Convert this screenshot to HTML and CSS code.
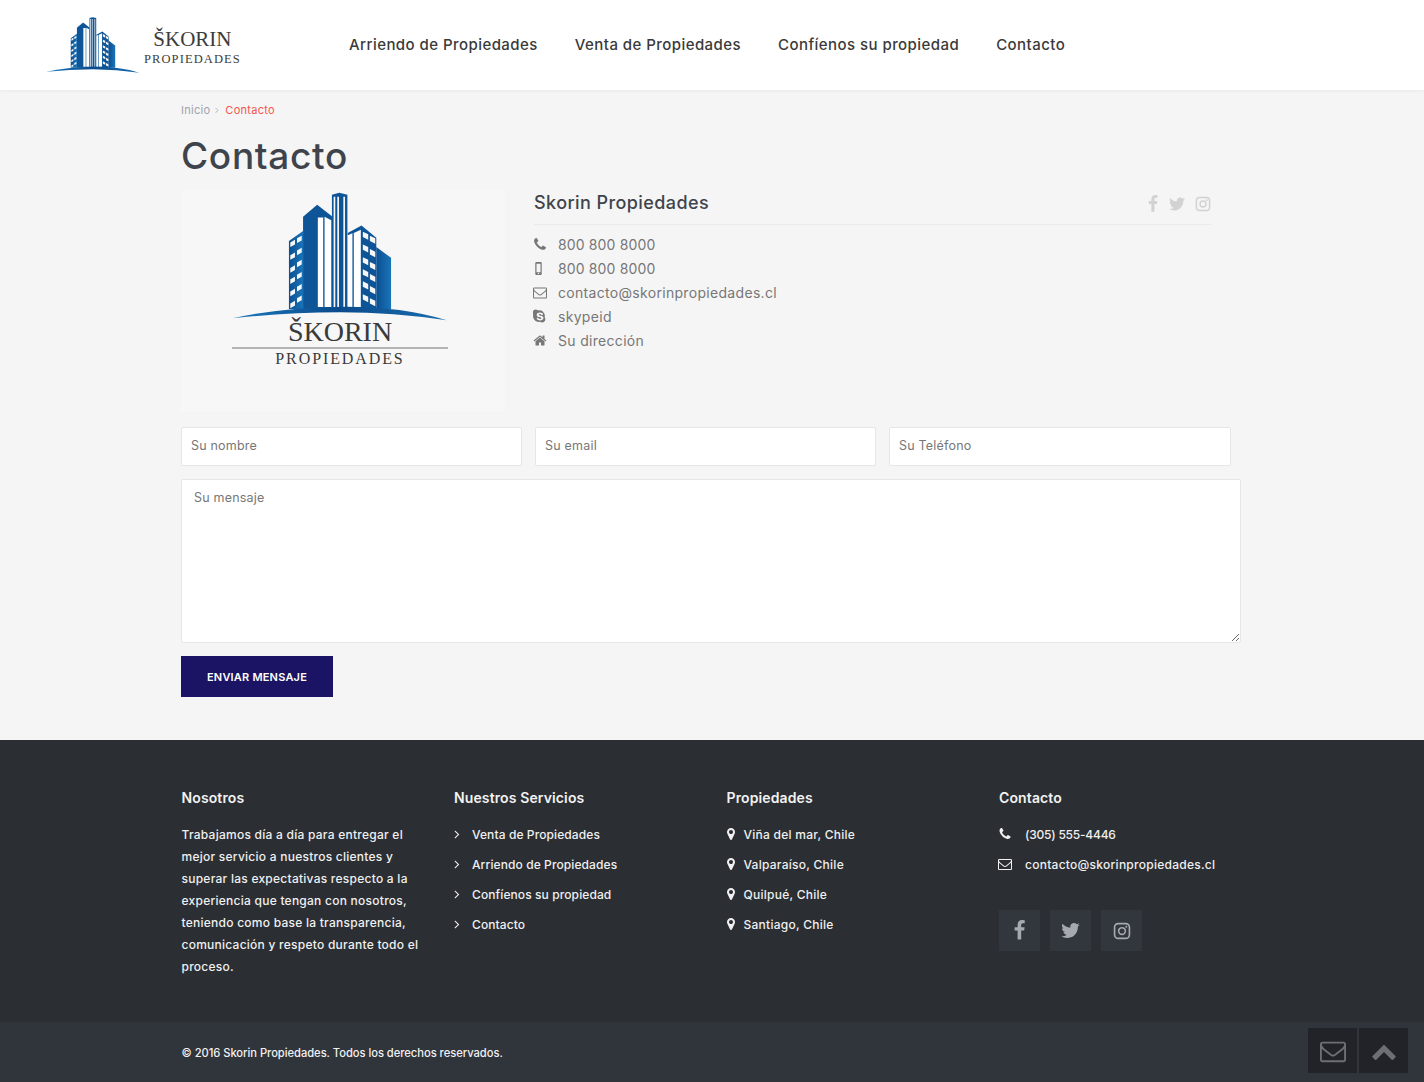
FILE: index.html
```html
<!DOCTYPE html>
<html lang="es">
<head>
<meta charset="utf-8">
<title>Contacto - Skorin Propiedades</title>
<link rel="stylesheet" href="styles.css">
</head>
<body>
<svg class="defs" width="0" height="0" aria-hidden="true">
  <defs>
    <linearGradient id="bl" x1="0" x2="1" y1="0" y2="0"><stop offset="0" stop-color="#0b4f92"/><stop offset="1" stop-color="#1a74b8"/></linearGradient>
    <linearGradient id="arc" x1="0" x2="1" y1="0" y2="0"><stop offset="0" stop-color="#1b79bb"/><stop offset=".5" stop-color="#0a4a8c"/><stop offset="1" stop-color="#1b6fb0"/></linearGradient>
    <symbol id="building" viewBox="160 30 640 390">
      <path fill="url(#bl)" d="M328 182l42-30v232h-42z"/>
      <path fill="#0d5597" d="M370 110l42-36 44 34v276h-86z"/>
      <path fill="#fff" d="M414 112l16 0 0 266-16 0zM434 110l20 10v258h-20z" />
      <path fill="#0d5597" d="M456 44l22-6 24 6v340h-46z"/>
      <path fill="#f6f6f6" d="M461 50h5v328h-5zM472 50h5v328h-5zM490 50h5v328h-5z"/>
      <path fill="#0d5597" d="M503 158l41-22 44 36v212h-85z"/>
      <path fill="#fff" d="M503 165l14-6v219h-14zM521 158l21-10v230h-21z"/>
      <path fill="url(#bl)" d="M588 200l44 32v152h-44z"/>
      <path fill="#f6f6f6" d="M332 186l14-8v14l-14 8zM352 174l14-8v14l-14 8zM332 224l14-8v14l-14 8zM352 210l14-8v14l-14 8zM332 262l14-8v14l-14 8zM352 246l14-8v14l-14 8zM332 296l14-8v14l-14 8zM352 282l14-8v14l-14 8zM332 332l14-8v14l-14 8zM352 318l14-8v14l-14 8zM332 368l14-8v14l-14 8zM352 352l14-8v14l-14 8z"/>
      <path fill="#f6f6f6" d="M548 154l16 8v16l-16-8zM569 166l16 8v16l-16-8zM548 192l16 8v16l-16-8zM569 206l16 8v16l-16-8zM548 230l16 8v16l-16-8zM569 244l16 8v16l-16-8zM548 266l16 8v16l-16-8zM569 280l16 8v16l-16-8zM548 302l16 8v16l-16-8zM569 316l16 8v16l-16-8zM548 340l16 8v16l-16-8zM569 352l16 8v16l-16-8z"/>
      <path fill="url(#arc)" d="M160 412Q300 380 480 378T798 418Q640 394 480 394T160 412z"/>
    </symbol>
    <symbol id="i-phone" viewBox="0 0 1408 1792"><path d="M1408 1240q0 27-10 70.5t-21 68.5q-21 50-122 106-94 51-186 51-27 0-53-3.5t-57.5-12.5-47-14.5-55.5-20.5-49-18q-98-35-175-83-127-79-264-216t-216-264q-48-77-83-175-3-9-18-49t-20.5-55.5-14.5-47-12.5-57.5-3.5-53q0-92 51-186 56-101 106-122 25-11 68.5-21t70.5-10q14 0 21 3 18 6 53 76 11 19 30 54t35 63.5 31 53.5q3 4 17.5 25t21.5 35.5 7 28.5q0 20-28.5 50t-62 55-62 53-28.5 46q0 9 5 22.5t8.5 20.5 14 24 11.5 19q76 137 174 235t235 174q2 1 19 11.5t24 14 20.5 8.5 22.5 5q18 0 46-28.5t53-62 55-62 50-28.5q14 0 28.5 7t35.5 21.5 25 17.5q25 15 53.5 31t63.5 35 54 30q70 35 76 53 3 7 3 21z"/></symbol>
    <symbol id="i-mail" viewBox="0 0 1792 1792"><path d="M1664 1504v-768q-32 36-69 66-268 206-426 338-51 43-83 67t-86.5 48.5-102.5 24.5h-2q-48 0-102.5-24.5t-86.5-48.5-83-67q-158-132-426-338-37-30-69-66v768q0 13 9.5 22.5t22.5 9.5h1472q13 0 22.5-9.5t9.5-22.5zm0-1051v-24.5l-.5-13-3-12.5-5.5-9-9-7.5-14-2.5h-1472q-13 0-22.5 9.5t-9.5 22.5q0 168 147 284 193 152 401 317 6 5 35 29.5t46 37.5 44.5 31.5 50.5 27.5 43 9h2q20 0 43-9t50.5-27.5 44.5-31.5 46-37.5 35-29.5q208-165 401-317 54-43 100.5-115.5t46.5-131.5zm128-37v1088q0 66-47 113t-113 47h-1472q-66 0-113-47t-47-113v-1088q0-66 47-113t113-47h1472q66 0 113 47t47 113z"/></symbol>
    <symbol id="i-mobile" viewBox="0 0 768 1792"><path fill-rule="evenodd" d="M112 128h544q112 0 112 112v1312q0 112-112 112H112Q0 1664 0 1552V240q0-112 112-112zm32 192v1024h480V320zm240 1090a80 80 0 1 0 0 160 80 80 0 0 0 0-160z"/></symbol>
    <symbol id="i-skype" viewBox="0 0 1536 1792"><path d="M1173 1063q0-50-19.5-91t-48.5-68.5-73-49-82.5-34-87.5-23.5l-104-24q-30-7-44-10.5t-35-11.5-30-16-16.5-21-7.5-30q0-77 144-77 43 0 77 12t54 28.5 38 33.5 40 29 48 12q47 0 75.5-32t28.5-77q0-55-56-99.5t-142-67.5-182-23q-68 0-132 15.5t-119.5 47-89 87-33.5 128.5q0 61 19 106.5t56 75.5 80 48.5 103 32.5l146 36q90 22 112 36 32 20 32 60 0 39-40 64.5t-105 25.5q-51 0-91.5-16t-65-38.5-45.5-45-46-38.5-54-16q-50 0-75.5 30t-25.5 75q0 92 122 157.5t291 65.5q73 0 140-18.5t122.5-53.5 88.5-93.5 33-131.5zm235 163q0 159-112.5 271.5t-271.5 112.5q-130 0-234-80-77 16-150 16-143 0-273.5-55.5t-225-150-150-225-55.5-273.5q0-73 16-150-80-104-80-234 0-159 112.5-271.5t271.5-112.5q130 0 234 80 77-16 150-16 143 0 273.5 55.5t225 150 150 225 55.5 273.5q0 73-16 150 80 104 80 234z"/></symbol>
    <symbol id="i-home" viewBox="0 0 1792 1792"><path d="M1472 992v480q0 26-19 45t-45 19h-384v-384h-256v384h-384q-26 0-45-19t-19-45v-480q0-1 .5-3t.5-3l575-474 575 474q1 2 1 6zm223-69l-62 74q-8 9-21 11h-3q-13 0-21-7l-692-577-692 577q-12 8-24 7-13-2-21-11l-62-74q-8-10-7-23.5t11-21.5l719-599q32-26 76-26t76 26l244 204v-195q0-14 9-23t23-9h192q14 0 23 9t9 23v408l219 182q10 8 11 21.5t-7 23.5z"/></symbol>
    <symbol id="i-fb" viewBox="0 0 1792 1792"><path d="M1343 12v264h-157q-86 0-116 36t-30 108v189h293l-39 296h-254v759h-306v-759h-255v-296h255v-218q0-186 104-288.5t277-102.5q147 0 228 12z"/></symbol>
    <symbol id="i-tw" viewBox="0 0 1792 1792"><path d="M1684 408q-67 98-162 167 1 14 1 42 0 130-38 259.5t-115.5 248.5-184.5 210.5-258 146-323 54.5q-271 0-496-145 35 4 76 4 225 0 401-138-105-2-188-64.5t-114-159.5q33 5 61 5 43 0 85-11-112-23-185.5-111.5t-73.5-205.5v-4q68 38 146 41-66-44-105-115t-39-154q0-88 44-163 121 149 294.5 238.5t371.5 99.5q-8-38-8-74 0-134 94.5-228.5t228.5-94.5q140 0 236 102 109-21 205-78-37 115-142 178 92-10 184-50z"/></symbol>
    <symbol id="i-ig" viewBox="0 0 24 24"><path fill-rule="evenodd" d="M7 1h10a6 6 0 0 1 6 6v10a6 6 0 0 1-6 6H7a6 6 0 0 1-6-6V7a6 6 0 0 1 6-6zm0 2.2A3.800 3.800 0 0 0 3.200 7v10A3.800 3.800 0 0 0 7 20.800h10a3.800 3.800 0 0 0 3.800-3.800V7A3.800 3.800 0 0 0 17 3.200zM12 6.500a5.500 5.500 0 1 1 0 11 5.500 5.500 0 0 1 0-11zm0 2.100a3.400 3.400 0 1 0 0 6.800 3.400 3.400 0 0 0 0-6.800zM17.700 4.900a1.400 1.400 0 1 1 0 2.800 1.400 1.400 0 0 1 0-2.800z"/></symbol>
    <symbol id="i-pin" viewBox="256 128 1024 1536"><path fill-rule="evenodd" d="M1152 640q0-106-75-181t-181-75-181 75-75 181 75 181 181 75 181-75 75-181zm256 0q0 109-33 179l-364 774q-16 33-47.5 52t-67.5 19-67.5-19-46.5-52l-365-774q-33-70-33-179 0-212 150-362t362-150 362 150 150 362z" transform="translate(-128 0)"/></symbol>
    <symbol id="i-angle" viewBox="0 0 1792 1792"><path d="M1171 960q0 13-10 23l-466 466q-10 10-23 10t-23-10l-50-50q-10-10-10-23t10-23l393-393-393-393q-10-10-10-23t10-23l50-50q10-10 23-10t23 10l466 466q10 10 10 23z"/></symbol>
    <symbol id="i-up" viewBox="0 0 1792 1792"><path d="M1683 1331l-166 165q-19 19-45 19t-45-19l-531-531-531 531q-19 19-45 19t-45-19l-166-165q-19-19-19-45.500t19-45.500l742-741q19-19 45-19t45 19l742 741q19 19 19 45.500t-19 45.500z"/></symbol>
  </defs>
</svg>

<header class="topbar">
  <a class="brand" href="#">
    <svg class="brand-mark"><use href="#building"/></svg>
    <span class="brand-text"><span class="brand-name">ŠKORIN</span><span class="brand-sub">PROPIEDADES</span></span>
  </a>
  <nav class="mainnav">
    <a href="#">Arriendo de Propiedades</a>
    <a href="#">Venta de Propiedades</a>
    <a href="#">Confíenos su propiedad</a>
    <a href="#">Contacto</a>
  </nav>
</header>

<main class="content">
  <div class="crumbs"><a href="#">Inicio</a><span class="sep"><svg><use href="#i-angle"/></svg></span><span class="current">Contacto</span></div>
  <h1 class="page-title">Contacto</h1>

  <section class="company">
    <div class="company-logo">
      <svg class="logo-mark"><use href="#building"/></svg>
      <span class="logo-name">ŠKORIN</span>
      <span class="logo-sub">PROPIEDADES</span>
    </div>
    <div class="company-info">
      <div class="company-head">
        <h3>Skorin Propiedades</h3>
        <div class="company-social">
          <svg class="s-fb"><use href="#i-fb"/></svg>
          <svg class="s-tw"><use href="#i-tw"/></svg>
          <svg class="s-ig"><use href="#i-ig"/></svg>
        </div>
      </div>
      <ul class="info-list">
        <li class="tel"><span class="ic"><svg><use href="#i-phone"/></svg></span>800 800 8000</li>
        <li class="tel"><span class="ic"><svg class="mob"><use href="#i-mobile"/></svg></span>800 800 8000</li>
        <li><span class="ic"><svg><use href="#i-mail"/></svg></span>contacto@skorinpropiedades.cl</li>
        <li><span class="ic"><svg><use href="#i-skype"/></svg></span>skypeid</li>
        <li><span class="ic"><svg><use href="#i-home"/></svg></span>Su dirección</li>
      </ul>
    </div>
  </section>

  <form class="contact-form">
    <div class="form-row">
      <input type="text" placeholder="Su nombre">
      <input type="text" placeholder="Su email">
      <input type="text" placeholder="Su Teléfono">
    </div>
    <textarea placeholder="Su mensaje"></textarea>
    <button type="button">ENVIAR MENSAJE</button>
  </form>
</main>

<footer class="site-footer">
  <div class="foot-grid">
    <div class="foot-col">
      <h4>Nosotros</h4>
      <p>Trabajamos día a día para entregar el mejor servicio a nuestros clientes y superar las expectativas respecto a la experiencia que tengan con nosotros, teniendo como base la transparencia, comunicación y respeto durante todo el proceso.</p>
    </div>
    <div class="foot-col">
      <h4>Nuestros Servicios</h4>
      <ul class="foot-list services">
        <li><svg><use href="#i-angle"/></svg>Venta de Propiedades</li>
        <li><svg><use href="#i-angle"/></svg>Arriendo de Propiedades</li>
        <li><svg><use href="#i-angle"/></svg>Confíenos su propiedad</li>
        <li><svg><use href="#i-angle"/></svg>Contacto</li>
      </ul>
    </div>
    <div class="foot-col">
      <h4>Propiedades</h4>
      <ul class="foot-list places">
        <li><svg><use href="#i-pin"/></svg>Viña del mar, Chile</li>
        <li><svg><use href="#i-pin"/></svg>Valparaíso, Chile</li>
        <li><svg><use href="#i-pin"/></svg>Quilpué, Chile</li>
        <li><svg><use href="#i-pin"/></svg>Santiago, Chile</li>
      </ul>
    </div>
    <div class="foot-col">
      <h4>Contacto</h4>
      <ul class="foot-list contacts">
        <li class="ftel"><span class="fic"><svg><use href="#i-phone"/></svg></span>(305) 555-4446</li>
        <li><span class="fic"><svg><use href="#i-mail"/></svg></span>contacto@skorinpropiedades.cl</li>
      </ul>
      <div class="foot-social">
        <a href="#"><svg><use href="#i-fb"/></svg></a>
        <a href="#"><svg><use href="#i-tw"/></svg></a>
        <a href="#"><svg class="ig"><use href="#i-ig"/></svg></a>
      </div>
    </div>
  </div>
  <div class="foot-bottom">© 2016 Skorin Propiedades. Todos los derechos reservados.</div>
</footer>

<div class="float-btns">
  <a href="#"><svg class="fb-mail"><use href="#i-mail"/></svg></a>
  <a href="#"><svg class="fb-up"><use href="#i-up"/></svg></a>
</div>
</body>
</html>
```
FILE: styles.css
```css
* { box-sizing: border-box; }
html, body { margin: 0; padding: 0; }
body {
  background: #f5f5f5;
  font-family: Inter, "Open Sans", sans-serif;
  color: #777;
  overflow: hidden;
  height: 1082px;
  position: relative;
}
a { color: inherit; text-decoration: none; }
ul { list-style: none; margin: 0; padding: 0; }
.defs { position: absolute; }

.topbar {
  height: 90px;
  background: #fff;
  box-shadow: 0 1px 3px rgba(0,0,0,.06);
  display: flex;
  align-items: center;
  padding-left: 46px;
}
.brand { display: flex; width: 303px; height: 90px; flex: none; }
.brand-mark { width: 94px; height: 57px; margin-top: 16px; flex: none; }
.brand-text { display: flex; flex-direction: column; align-items: center; margin-left: 4px; padding-top: 26px; font-family: "Liberation Serif", serif; color: #3c3c3c; }
.brand-name { font-size: 21px; line-height: 26px; }
.brand-sub { font-size: 12.5px; line-height: 14px; letter-spacing: 1.1px; }
.mainnav { display: flex; gap: 37px; margin-top: -2px; font-family: Inter, sans-serif; font-weight: 500; font-size: 15px; color: #3a3a3a; letter-spacing: .44px; }

.content { padding: 0 0 0 181px; height: 650px; }
.crumbs { padding-top: 13px; font-size: 11px; line-height: 14px; color: #a0a3ad; display: flex; letter-spacing: .28px; }
.crumbs .sep { margin: 0 3px 0 2px; display: flex; align-items: center; }
.crumbs .sep svg { width: 10px; height: 10px; fill: #bbb; }
.crumbs .current { color: #f4564f; }
.page-title { margin: 17px 0 0; font-size: 37px; line-height: 44px; font-weight: 500; color: #3f444c; letter-spacing: .7px; }

.company { display: flex; height: 222px; margin-top: 12px; }
.company-logo { width: 324px; flex: none; background: #f7f7f7; display: flex; flex-direction: column; align-items: center; padding-right: 6px; }
.logo-mark { width: 216px; height: 131px; flex: none; }
.logo-name { width: 216px; margin-top: -4px; border-bottom: 2px solid #b5b5b5; font-family: "Liberation Serif", serif; font-size: 28px; line-height: 30px; text-align: center; color: #3a3a3a; }
.logo-sub { font-family: "Liberation Serif", serif; font-size: 16px; line-height: 20px; letter-spacing: 1.9px; color: #3a3a3a; }
.company-info { width: 678px; margin-left: 29px; flex: none; }
.company-head { display: flex; justify-content: space-between; align-items: flex-start; height: 35px; border-bottom: 1px solid #ebebeb; }
.company-head h3 { margin: 0; font-size: 18px; font-weight: 500; color: #3f444c; letter-spacing: .42px; line-height: 26px; }
.company-social { display: flex; align-items: center; gap: 6px; padding-top: 5px; padding-right: 1px; }
.company-social svg { fill: #d2d2d2; width: 18px; height: 18px; display: block; }
.company-social .s-ig { width: 16px; height: 16px; margin-left: 3px; }
.info-list { padding-top: 7px; font-size: 14px; color: #777; letter-spacing: .31px; }
.info-list li { display: flex; align-items: center; height: 24px; }
.info-list .tel { letter-spacing: .14px; }
.ic { width: 24px; flex: none; display: flex; margin-left: -1px; margin-right: 1px; }
.ic svg { width: 14px; height: 15px; fill: #777; }
.ic svg.mob { width: 9px; margin-left: 1px; }

.contact-form { padding-top: 15px; width: 1060px; }
.form-row { display: flex; gap: 13px; margin-bottom: 13px; width: 1050px; }
.form-row input {
  flex: 341 1 0; min-width: 0; height: 39px; border: 1px solid #e6e6e6; background: #fff;
  padding: 0 9px 2px; font: 12.5px Inter, sans-serif; color: #777; letter-spacing: .2px; border-radius: 2px; outline: 0;
}
.form-row input:last-child { flex-grow: 342; }
.contact-form ::placeholder { color: #777; opacity: 1; }
.contact-form textarea {
  display: block; width: 1060px; height: 164px; border: 1px solid #e6e6e6; background: #fff;
  padding: 9px 12px; font: 12.5px/18px Inter, sans-serif; letter-spacing: .2px; border-radius: 2px; outline: 0;
}
.contact-form button {
  display: block; margin-top: 13px; width: 152px; height: 41px; border: 0; background: #1b1464; color: #fff;
  font: 600 11px Inter, sans-serif; letter-spacing: .2px;
}

.site-footer { background: #2b2e33; color: #fff; height: 342px; }
.foot-grid { height: 282px; padding: 48px 0 0 181.500px; display: grid; grid-template-columns: repeat(4, 272.500px); }
.foot-col { padding-right: 30px; }
.foot-col h4 { margin: 0 0 11px; font-size: 14px; line-height: 20px; font-weight: 600; color: #f2f2f2; letter-spacing: .12px; }
.foot-col p { margin: 16px 0 0; font-size: 12px; line-height: 22px; color: #f0f0f0; letter-spacing: .25px; font-weight: 500; }
.foot-list { font-size: 12px; color: #f0f0f0; font-weight: 500; letter-spacing: .26px; }
.foot-list li { display: flex; align-items: center; height: 30px; white-space: nowrap; }
.foot-list .ftel { letter-spacing: -.22px; }
.foot-list svg { fill: #f0f0f0; flex: none; }
.services { letter-spacing: .1px; }
.services svg { width: 14px; height: 14px; margin-right: 8px; margin-left: -4px; }
.places svg { width: 8px; height: 12px; margin-right: 9px; }
.fic { width: 26px; flex: none; display: flex; margin-left: -1px; margin-right: 1px; }
.fic svg { width: 14px; height: 14px; }
.foot-social { display: flex; gap: 10px; margin-top: 31px; }
.foot-social a { width: 41px; height: 41px; background: #32363d; display: flex; align-items: center; justify-content: center; }
.foot-social svg { width: 21px; height: 21px; fill: #a6aab0; }
.foot-social svg.ig { width: 18px; height: 18px; }
.foot-bottom { height: 60px; background: #30343b; padding: 2px 0 0 181.500px; display: flex; align-items: center; font-size: 11.2px; letter-spacing: -.04px; font-weight: 500; color: #f0f0f0; }

.float-btns { position: fixed; right: 16px; bottom: 9px; display: flex; gap: 2px; }
.float-btns a { width: 49px; height: 45px; background: #212328; display: flex; align-items: center; justify-content: center; }
.float-btns svg { fill: #6c7074; }
.fb-mail { width: 26px; height: 26px; }
.fb-up { width: 26px; height: 26px; }
```
